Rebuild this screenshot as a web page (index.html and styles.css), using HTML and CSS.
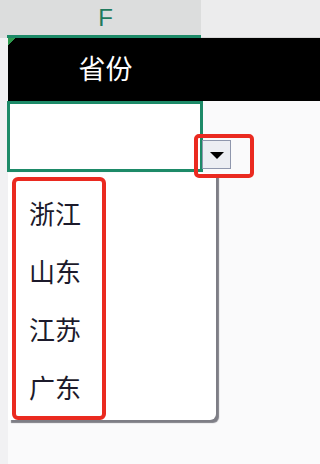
FILE: index.html
```html
<!DOCTYPE html>
<html lang="zh">
<head>
<meta charset="utf-8">
<link rel="stylesheet" href="styles.css">
</head>
<body>
<div class="sheet">
  <div class="hdr">
    <div class="col-f">F</div>
    <div class="col-g"></div>
  </div>
  <div class="title-row">
    <div class="title">省份</div>
  </div>
  <div class="cell-row">
    <div class="cell"></div>
    <div class="red-btn-box"></div>
    <div class="dd-btn"><span class="tri"></span></div>
  </div>
  <div class="list">
    <div class="red-items">
      <div class="item">浙江</div>
      <div class="item">山东</div>
      <div class="item">江苏</div>
      <div class="item">广东</div>
    </div>
  </div>
</div>
</body>
</html>
```
FILE: styles.css
```css
html, body {
  margin: 0;
  padding: 0;
}
body {
  height: 464px;
  overflow: hidden;
  background: #f7f7f9;
  font-family: "Noto Sans CJK SC", "Noto Sans", sans-serif;
}
.sheet {
  height: 464px;
  display: flex;
  flex-direction: column;
  background: linear-gradient(90deg, #f1f1f3 0 8px, #fafafb 8px);
}
.hdr {
  display: flex;
  height: 38px;
}
.col-f {
  width: 201px;
  height: 38px;
  box-sizing: border-box;
  background: linear-gradient(#1d8a68, #1d8a68) 7px 100% / 194px 3px no-repeat, #dcdddd;
  color: #1f7a5e;
  font-family: "Liberation Sans", "Noto Sans", sans-serif;
  font-size: 24px;
  line-height: 36px;
  text-align: center;
  padding-left: 10px;
}
.col-g {
  flex: 1;
  background: #ececed;
  border-bottom: 1px solid #d8d8d8;
  box-sizing: border-box;
}
.title-row {
  margin-left: 8px;
  height: 63px;
  background: linear-gradient(135deg, #2f9a4e 0 5px, transparent 5px), #000;
  display: flex;
}
.title {
  width: 195px;
  text-align: center;
  color: #fff;
  font-size: 27px;
  line-height: 60px;
}
.cell-row {
  position: relative;
  height: 72px;
}
.cell {
  margin-left: 7px;
  width: 196px;
  height: 71px;
  box-sizing: border-box;
  border: 3px solid #1d8a68;
  background: #fff;
}
.red-btn-box {
  position: absolute;
  left: 194px;
  top: 33px;
  width: 60px;
  height: 44px;
  box-sizing: border-box;
  border: 4px solid #ea2a20;
  border-radius: 5px;
}
.dd-btn {
  position: absolute;
  left: 202px;
  top: 39px;
  width: 29px;
  height: 29px;
  box-sizing: border-box;
  background: #eceef3;
  border: 1px solid #8f97ad;
  display: flex;
  align-items: center;
  justify-content: center;
}
.tri {
  width: 0;
  height: 0;
  border-left: 7px solid transparent;
  border-right: 7px solid transparent;
  border-top: 7px solid #000;
  margin-top: 2px;
}
.list {
  margin-left: 8px;
  width: 208px;
  height: 247px;
  box-sizing: border-box;
  background: #fff;
  border-bottom-right-radius: 6px;
  box-shadow: 3px 3px 1px rgba(60, 60, 70, 0.65);
  padding: 4px 0 0 4px;
}
.red-items {
  width: 94px;
  box-sizing: border-box;
  border: 4px solid #ea2a20;
  border-radius: 6px;
  padding: 3px 0 0 13px;
}
.item {
  font-size: 26px;
  line-height: 58px;
  height: 58px;
  color: #1c1a2b;
}
```
